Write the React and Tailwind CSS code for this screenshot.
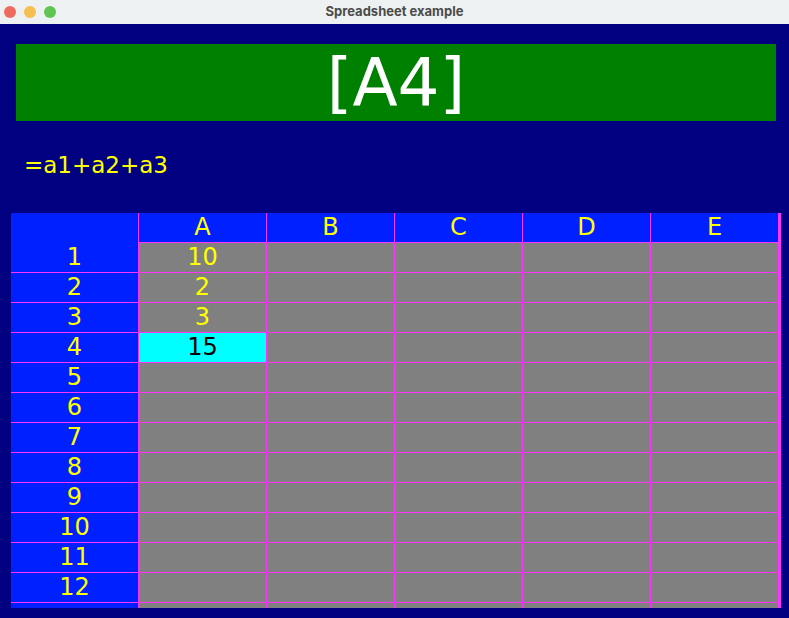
const COLS = ["A", "B", "C", "D", "E"];
const ROWS = Array.from({ length: 13 }, (_, i) => i + 1);

const values = { A1: "10", A2: "2", A3: "3", A4: "15" };
const current = "A4";

export default function App() {
  return (
    <div className="w-[789px] h-[618px] bg-[#000080] flex flex-col overflow-hidden font-['DejaVu_Sans',sans-serif]">
      {/* window title bar */}
      <div className="h-[24px] shrink-0 bg-[#eef1f2] grid grid-cols-[1fr_auto_1fr] items-center">
        <div className="flex items-center gap-[8px] pl-[4px]">
          <span className="w-[12px] h-[12px] rounded-full bg-[#ee6a5e]" />
          <span className="w-[12px] h-[12px] rounded-full bg-[#f5bf4f]" />
          <span className="w-[12px] h-[12px] rounded-full bg-[#61c554]" />
        </div>
        <div className="text-[13px] font-bold text-[#4b4b4b] font-['Inter',sans-serif]">Spreadsheet example</div>
        <div />
      </div>

      <div className="mt-[20px] ml-[16px] mr-[13px] h-[77px] shrink-0 bg-[#008000] text-white text-[66px] leading-[77px] text-center">
        [{current}]
      </div>

      <div className="mt-[33px] pl-[24px] h-[22px] shrink-0 text-[23px] leading-[22px] text-[#ffff00]">
        =a1+a2+a3
      </div>

      <div className="mt-[37px] ml-[11px] w-[770px] h-[395px] shrink-0 overflow-hidden border-r-[3px] border-[#ff33ff] text-[24px] leading-[29px] text-[#ffff00]">
        <div className="flex h-[29px]">
          <div className="w-[127px] shrink-0 bg-[#0020ff]" />
          {COLS.map((c) => (
            <div key={c} className="w-[128px] shrink-0 bg-[#0020ff] border-l border-[#ff33ff] text-center">
              {c}
            </div>
          ))}
        </div>
        {ROWS.map((r) => (
          <div key={r} className="flex h-[30px]">
            <div className={`w-[127px] shrink-0 bg-[#0020ff] border-t text-center ${r === 1 ? "border-[#0020ff]" : "border-[#ff33ff]"}`}>
              {r < 13 ? r : ""}
            </div>
            {COLS.map((c) => {
              const id = c + r;
              const sel = id === current;
              return (
                <div key={c} className={`w-[128px] shrink-0 border-l border-t border-[#ff33ff] text-center ${sel ? "bg-[#00ffff] text-black" : "bg-[#808080]"}`}>
                  {values[id] || ""}
                </div>
              );
            })}
          </div>
        ))}
      </div>
    </div>
  );
}
